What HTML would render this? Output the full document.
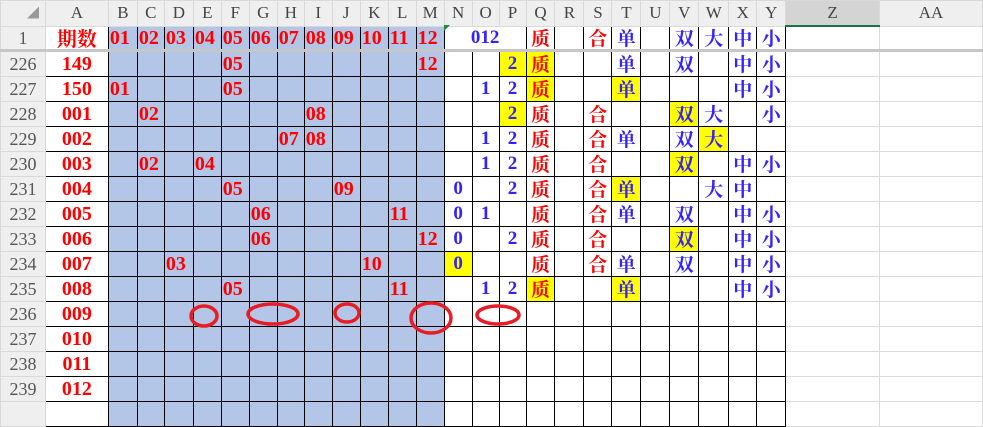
<!DOCTYPE html>
<html><head><meta charset="utf-8"><style>
body{margin:0;width:983px;height:408px;overflow:hidden;background:#fff;font-family:"Liberation Serif","Noto Serif CJK SC",serif;}
table{border-collapse:collapse;table-layout:fixed;position:absolute;left:0;top:0;}
td{height:24px;padding:0;border:1px solid #000;text-align:center;overflow:hidden;white-space:nowrap;font-size:19px;line-height:22px;}
tr.h td{background:#efefef;border:1px solid #d9d9d9;color:#444;font-size:17px;font-weight:normal;}
tr.h td.z{background:#d4d4d4;border-bottom:2px solid #1e7145;}
td.rh{background:#efefef;border:1px solid #d9d9d9;color:#555;font-size:18px;}
td.a{color:#f00;font-weight:bold;font-size:20px;border-left:none;}
td.b{background:#b4c6e7;color:#f00;font-weight:bold;text-align:left;padding-left:1px;font-size:20px;}
td.n{color:#3322ff;font-weight:bold;font-size:19px;}
td.r{color:#f00;font-family:"Noto Serif CJK SC",serif;font-size:19px;font-weight:bold;}
td.u{color:#3322ff;font-family:"Noto Serif CJK SC",serif;font-size:19px;font-weight:bold;}
td.y{background:#ffff00;}
td.g{border:1px solid #dcdcdc;}
tr.one td{border-bottom:3px solid #c6c6c6;height:22px;}
</style></head><body>
<table>
<colgroup><col style="width:45px"><col style="width:63px"><col style="width:29px"><col style="width:27px"><col style="width:29px"><col style="width:28px"><col style="width:28px"><col style="width:28px"><col style="width:27px"><col style="width:28px"><col style="width:28px"><col style="width:28px"><col style="width:28px"><col style="width:28px"><col style="width:28px"><col style="width:27px"><col style="width:27px"><col style="width:29px"><col style="width:29px"><col style="width:28px"><col style="width:29px"><col style="width:29px"><col style="width:29px"><col style="width:30px"><col style="width:28px"><col style="width:29px"><col style="width:94px"><col style="width:103px"></colgroup>
<tr class="h"><td style="font-size:12px;color:#999;text-align:right;padding-right:6px">◢</td><td>A</td><td>B</td><td>C</td><td>D</td><td>E</td><td>F</td><td>G</td><td>H</td><td>I</td><td>J</td><td>K</td><td>L</td><td>M</td><td>N</td><td>O</td><td>P</td><td>Q</td><td>R</td><td>S</td><td>T</td><td>U</td><td>V</td><td>W</td><td>X</td><td>Y</td><td class="z">Z</td><td>AA</td></tr>
<tr class="one"><td class="rh">1</td><td class="a" style="font-family:'Noto Serif CJK SC',serif">期数</td><td class="b">01</td><td class="b">02</td><td class="b">03</td><td class="b">04</td><td class="b">05</td><td class="b">06</td><td class="b">07</td><td class="b">08</td><td class="b">09</td><td class="b">10</td><td class="b">11</td><td class="b">12</td><td class="n" colspan="3">012</td><td class="r">质</td><td></td><td class="r">合</td><td class="u">单</td><td></td><td class="u">双</td><td class="u">大</td><td class="u">中</td><td class="u">小</td><td class="g"></td><td class="g"></td></tr>
<tr><td class="rh">226</td><td class="a">149</td><td class="b"></td><td class="b"></td><td class="b"></td><td class="b"></td><td class="b">05</td><td class="b"></td><td class="b"></td><td class="b"></td><td class="b"></td><td class="b"></td><td class="b"></td><td class="b">12</td><td></td><td></td><td class="n y">2</td><td class="r y">质</td><td></td><td></td><td class="u">单</td><td></td><td class="u">双</td><td></td><td class="u">中</td><td class="u">小</td><td class="g"></td><td class="g"></td></tr>
<tr><td class="rh">227</td><td class="a">150</td><td class="b">01</td><td class="b"></td><td class="b"></td><td class="b"></td><td class="b">05</td><td class="b"></td><td class="b"></td><td class="b"></td><td class="b"></td><td class="b"></td><td class="b"></td><td class="b"></td><td></td><td class="n">1</td><td class="n">2</td><td class="r y">质</td><td></td><td></td><td class="u y">单</td><td></td><td></td><td></td><td class="u">中</td><td class="u">小</td><td class="g"></td><td class="g"></td></tr>
<tr><td class="rh">228</td><td class="a">001</td><td class="b"></td><td class="b">02</td><td class="b"></td><td class="b"></td><td class="b"></td><td class="b"></td><td class="b"></td><td class="b">08</td><td class="b"></td><td class="b"></td><td class="b"></td><td class="b"></td><td></td><td></td><td class="n y">2</td><td class="r">质</td><td></td><td class="r">合</td><td></td><td></td><td class="u y">双</td><td class="u">大</td><td></td><td class="u">小</td><td class="g"></td><td class="g"></td></tr>
<tr><td class="rh">229</td><td class="a">002</td><td class="b"></td><td class="b"></td><td class="b"></td><td class="b"></td><td class="b"></td><td class="b"></td><td class="b">07</td><td class="b">08</td><td class="b"></td><td class="b"></td><td class="b"></td><td class="b"></td><td></td><td class="n">1</td><td class="n">2</td><td class="r">质</td><td></td><td class="r">合</td><td class="u">单</td><td></td><td class="u">双</td><td class="u y">大</td><td></td><td></td><td class="g"></td><td class="g"></td></tr>
<tr><td class="rh">230</td><td class="a">003</td><td class="b"></td><td class="b">02</td><td class="b"></td><td class="b">04</td><td class="b"></td><td class="b"></td><td class="b"></td><td class="b"></td><td class="b"></td><td class="b"></td><td class="b"></td><td class="b"></td><td></td><td class="n">1</td><td class="n">2</td><td class="r">质</td><td></td><td class="r">合</td><td></td><td></td><td class="u y">双</td><td></td><td class="u">中</td><td class="u">小</td><td class="g"></td><td class="g"></td></tr>
<tr><td class="rh">231</td><td class="a">004</td><td class="b"></td><td class="b"></td><td class="b"></td><td class="b"></td><td class="b">05</td><td class="b"></td><td class="b"></td><td class="b"></td><td class="b">09</td><td class="b"></td><td class="b"></td><td class="b"></td><td class="n">0</td><td></td><td class="n">2</td><td class="r">质</td><td></td><td class="r">合</td><td class="u y">单</td><td></td><td></td><td class="u">大</td><td class="u">中</td><td></td><td class="g"></td><td class="g"></td></tr>
<tr><td class="rh">232</td><td class="a">005</td><td class="b"></td><td class="b"></td><td class="b"></td><td class="b"></td><td class="b"></td><td class="b">06</td><td class="b"></td><td class="b"></td><td class="b"></td><td class="b"></td><td class="b">11</td><td class="b"></td><td class="n">0</td><td class="n">1</td><td></td><td class="r">质</td><td></td><td class="r">合</td><td class="u">单</td><td></td><td class="u">双</td><td></td><td class="u">中</td><td class="u">小</td><td class="g"></td><td class="g"></td></tr>
<tr><td class="rh">233</td><td class="a">006</td><td class="b"></td><td class="b"></td><td class="b"></td><td class="b"></td><td class="b"></td><td class="b">06</td><td class="b"></td><td class="b"></td><td class="b"></td><td class="b"></td><td class="b"></td><td class="b">12</td><td class="n">0</td><td></td><td class="n">2</td><td class="r">质</td><td></td><td class="r">合</td><td></td><td></td><td class="u y">双</td><td></td><td class="u">中</td><td class="u">小</td><td class="g"></td><td class="g"></td></tr>
<tr><td class="rh">234</td><td class="a">007</td><td class="b"></td><td class="b"></td><td class="b">03</td><td class="b"></td><td class="b"></td><td class="b"></td><td class="b"></td><td class="b"></td><td class="b"></td><td class="b">10</td><td class="b"></td><td class="b"></td><td class="n y">0</td><td></td><td></td><td class="r">质</td><td></td><td class="r">合</td><td class="u">单</td><td></td><td class="u">双</td><td></td><td class="u">中</td><td class="u">小</td><td class="g"></td><td class="g"></td></tr>
<tr><td class="rh">235</td><td class="a">008</td><td class="b"></td><td class="b"></td><td class="b"></td><td class="b"></td><td class="b">05</td><td class="b"></td><td class="b"></td><td class="b"></td><td class="b"></td><td class="b"></td><td class="b">11</td><td class="b"></td><td></td><td class="n">1</td><td class="n">2</td><td class="r y">质</td><td></td><td></td><td class="u y">单</td><td></td><td></td><td></td><td class="u">中</td><td class="u">小</td><td class="g"></td><td class="g"></td></tr>
<tr><td class="rh">236</td><td class="a">009</td><td class="b"></td><td class="b"></td><td class="b"></td><td class="b"></td><td class="b"></td><td class="b"></td><td class="b"></td><td class="b"></td><td class="b"></td><td class="b"></td><td class="b"></td><td class="b"></td><td></td><td></td><td></td><td></td><td></td><td></td><td></td><td></td><td></td><td></td><td></td><td></td><td class="g"></td><td class="g"></td></tr>
<tr><td class="rh">237</td><td class="a">010</td><td class="b"></td><td class="b"></td><td class="b"></td><td class="b"></td><td class="b"></td><td class="b"></td><td class="b"></td><td class="b"></td><td class="b"></td><td class="b"></td><td class="b"></td><td class="b"></td><td></td><td></td><td></td><td></td><td></td><td></td><td></td><td></td><td></td><td></td><td></td><td></td><td class="g"></td><td class="g"></td></tr>
<tr><td class="rh">238</td><td class="a">011</td><td class="b"></td><td class="b"></td><td class="b"></td><td class="b"></td><td class="b"></td><td class="b"></td><td class="b"></td><td class="b"></td><td class="b"></td><td class="b"></td><td class="b"></td><td class="b"></td><td></td><td></td><td></td><td></td><td></td><td></td><td></td><td></td><td></td><td></td><td></td><td></td><td class="g"></td><td class="g"></td></tr>
<tr><td class="rh">239</td><td class="a">012</td><td class="b"></td><td class="b"></td><td class="b"></td><td class="b"></td><td class="b"></td><td class="b"></td><td class="b"></td><td class="b"></td><td class="b"></td><td class="b"></td><td class="b"></td><td class="b"></td><td></td><td></td><td></td><td></td><td></td><td></td><td></td><td></td><td></td><td></td><td></td><td></td><td class="g"></td><td class="g"></td></tr>
<tr><td class="rh"></td><td class="a"></td><td class="b"></td><td class="b"></td><td class="b"></td><td class="b"></td><td class="b"></td><td class="b"></td><td class="b"></td><td class="b"></td><td class="b"></td><td class="b"></td><td class="b"></td><td class="b"></td><td></td><td></td><td></td><td></td><td></td><td></td><td></td><td></td><td></td><td></td><td></td><td></td><td class="g"></td><td class="g"></td></tr>
</table>
<div style="position:absolute;left:444px;top:25px;width:0;height:0;border-top:6px solid #1e8a3c;border-right:6px solid transparent"></div>
<svg style="position:absolute;left:0;top:0" width="983" height="408">
<g fill="none" stroke="#e81c24" stroke-width="3.5">
<ellipse cx="204" cy="316" rx="13" ry="10"/>
<ellipse cx="273" cy="314" rx="25" ry="10"/>
<ellipse cx="347" cy="313" rx="12" ry="9"/>
<ellipse cx="431" cy="318" rx="20" ry="15"/>
<ellipse cx="498" cy="315" rx="21" ry="9"/>
</g></svg>
</body></html>
